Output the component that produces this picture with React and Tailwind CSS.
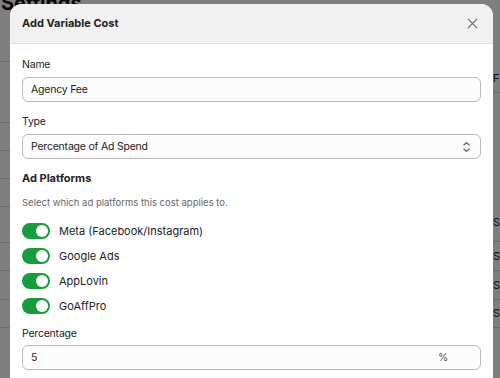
import React from "react";

const font = { fontFamily: "Inter, 'Noto Sans', sans-serif" };

function Toggle() {
  return (
    <div className="flex h-[16px] w-[28px] shrink-0 items-center justify-end rounded-full bg-[#189d3c] px-[2px]">
      <div className="h-[12px] w-[12px] rounded-full bg-white" />
    </div>
  );
}

function Strip({ items, align }) {
  return (
    <div className="flex flex-col">
      {items.map((it, i) =>
        it.text === null ? (
          <div key={i} style={{ height: it.h }} />
        ) : (
          <div
            key={i}
            style={{ height: it.h }}
            className={
              "flex items-center whitespace-nowrap border-b border-[#d8d8d8] text-[11px] text-[#222] " +
              (align === "right" ? "justify-end" : "justify-start")
            }
          >
            {it.text}
          </div>
        )
      )}
    </div>
  );
}

export default function App() {
  const left = [
    { h: 30, text: null },
    { h: 32, text: "Cost C" },
    { h: 33, text: null },
    { h: 28, text: "Shopify fees sl" },
    { h: 28, text: "Payment" },
    { h: 28, text: "Payment" },
    { h: 28, text: "Payment" },
    { h: 7, text: null },
    { h: 29, text: "Partner" },
    { h: 28, text: "Breakak" },
    { h: 29, text: "Recorc" },
    { h: 28, text: "Recorc" },
  ];
  const right = [
    { h: 64, text: null },
    { h: 29, text: "Fixed" },
    { h: 30, text: null },
    { h: 81, text: null },
    { h: 38, text: "Shopify" },
    { h: 29, text: "Shopify" },
    { h: 29, text: "Shopify" },
    { h: 28, text: "Shopify" },
  ];

  return (
    <div className="relative h-[378px] w-[500px] overflow-hidden bg-white" style={font}>
      {/* background page */}
      <div className="flex h-full w-full flex-col">
        <div className="-mt-[9px] pl-[1px] text-[20px] font-bold leading-[24px] text-[#111]">Settings</div>
        <div className="-mt-[15px] flex flex-1">
          <div className="w-[10px] overflow-hidden">
            <div className="flex w-[200px] justify-end">
              <div className="w-[200px]">
                <Strip items={left} align="right" />
              </div>
            </div>
          </div>
          <div className="flex-1" />
          <div className="w-[7px] overflow-hidden">
            <div className="w-[100px]">
              <Strip items={right} align="left" />
            </div>
          </div>
        </div>
      </div>

      {/* overlay */}
      <div className="absolute inset-0 bg-black/50" />

      {/* modal */}
      <div className="absolute left-[10px] top-[4px] w-[483px] overflow-hidden rounded-[12px] bg-white pb-[30px]">
        <div className="flex h-[40px] items-center justify-between border-b border-[#dedede] bg-[#f1f1f1] pl-[12px] pr-[15px]">
          <div className="text-[11px] font-bold text-[#222]">Add Variable Cost</div>
          <svg width="11" height="11" viewBox="0 0 11 11" fill="none" stroke="#666" strokeWidth="1.1" strokeLinecap="round">
            <path d="M1.2 1.2 L9.8 9.8 M9.8 1.2 L1.2 9.8" />
          </svg>
        </div>
        <div className="flex flex-col px-[12px] pt-[13px] text-[10.5px] tracking-[-0.02em] text-[#222]">
          <div className="leading-[16px]">Name</div>
          <div className="mt-[4px] flex h-[25px] items-center rounded-[6px] border border-[#b9b9b9] bg-[#fcfcfc] px-[8px]">
            Agency Fee
          </div>
          <div className="mt-[12px] leading-[16px]">Type</div>
          <div className="mt-[4px] flex h-[25px] items-center justify-between rounded-[6px] border border-[#b9b9b9] bg-[#fcfcfc] pl-[8px] pr-[9px]">
            <span>Percentage of Ad Spend</span>
            <svg width="9" height="12" viewBox="0 0 9 12" fill="none" stroke="#555" strokeWidth="1.1" strokeLinecap="round" strokeLinejoin="round">
              <path d="M1.8 4 L4.5 1.6 L7.2 4" />
              <path d="M1.8 8 L4.5 10.4 L7.2 8" />
            </svg>
          </div>
          <div className="mt-[11px] text-[11px] font-bold leading-[16px] tracking-normal">Ad Platforms</div>
          <div className="mt-[10px] text-[9.5px] leading-[14px] tracking-normal text-[#666]">Select which ad platforms this cost applies to.</div>
          <div className="mt-[13px] flex flex-col gap-[9px] text-[11px] tracking-normal">
            {["Meta (Facebook/Instagram)", "Google Ads", "AppLovin", "GoAffPro"].map((p) => (
              <div key={p} className="flex h-[16px] items-center gap-[9px]">
                <Toggle />
                <span>{p}</span>
              </div>
            ))}
          </div>
          <div className="mt-[12px] leading-[16px]">Percentage</div>
          <div className="mt-[3px] flex h-[25px] items-center justify-between rounded-[6px] border border-[#b9b9b9] bg-[#fcfcfc] pl-[8px] pr-[32px]">
            <span>5</span>
            <span className="text-[#555]">%</span>
          </div>
        </div>
      </div>
    </div>
  );
}
